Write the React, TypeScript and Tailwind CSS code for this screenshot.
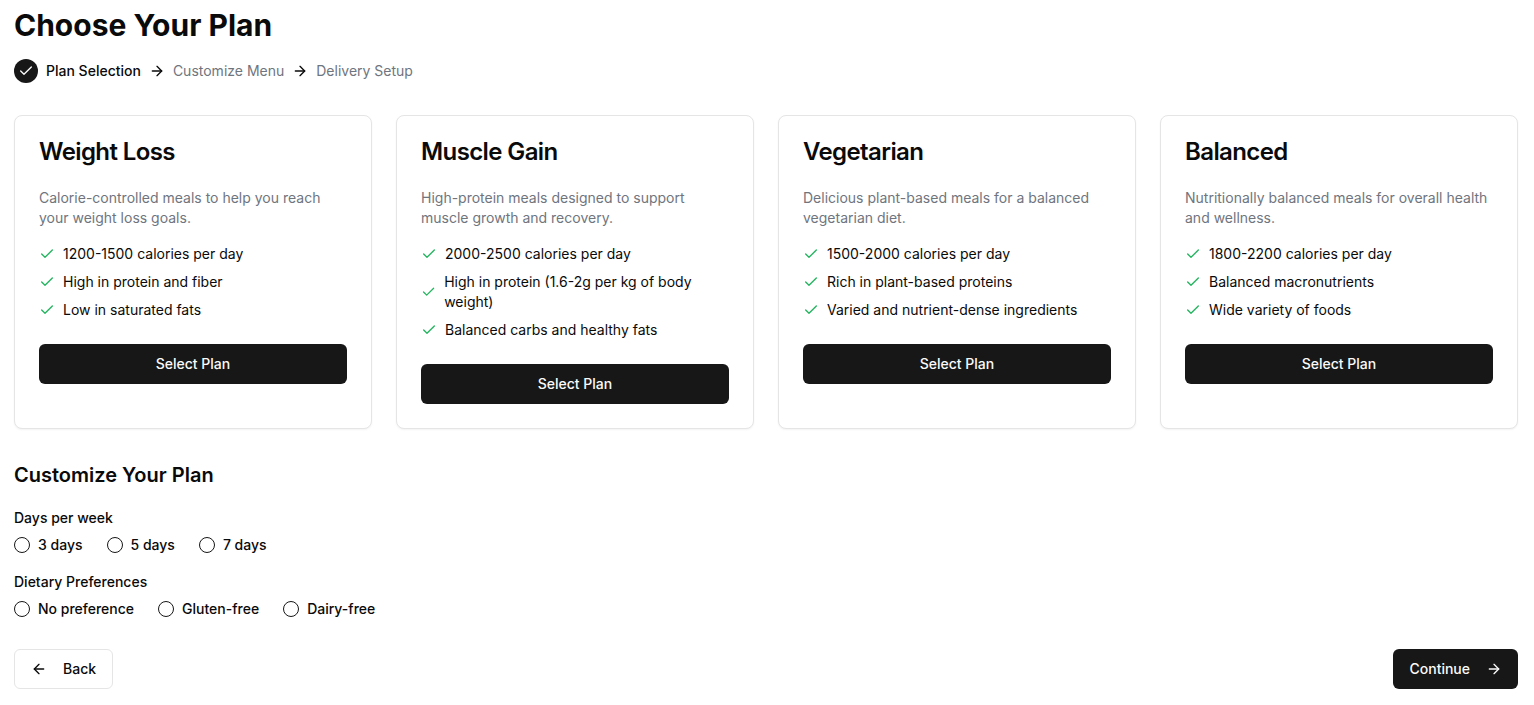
import { ArrowLeft, ArrowRight, Check } from "lucide-react";

const plans = [
  {
    name: "Weight Loss",
    description: "Calorie-controlled meals to help you reach your weight loss goals.",
    features: ["1200-1500 calories per day", "High in protein and fiber", "Low in saturated fats"],
  },
  {
    name: "Muscle Gain",
    description: "High-protein meals designed to support muscle growth and recovery.",
    features: [
      "2000-2500 calories per day",
      "High in protein (1.6-2g per kg of body weight)",
      "Balanced carbs and healthy fats",
    ],
  },
  {
    name: "Vegetarian",
    description: "Delicious plant-based meals for a balanced vegetarian diet.",
    features: [
      "1500-2000 calories per day",
      "Rich in plant-based proteins",
      "Varied and nutrient-dense ingredients",
    ],
  },
  {
    name: "Balanced",
    description: "Nutritionally balanced meals for overall health and wellness.",
    features: ["1800-2200 calories per day", "Balanced macronutrients", "Wide variety of foods"],
  },
];

function PlanCard({ plan }: { plan: (typeof plans)[number] }) {
  return (
    <div className="rounded-lg border border-[#e5e5e5] bg-white p-6 shadow-[0_1px_2px_0_rgba(0,0,0,0.05)]">
      <h3 className="mb-6 text-2xl leading-none font-semibold tracking-tight">{plan.name}</h3>
      <p className="mb-4 text-sm text-[#6f757e]">{plan.description}</p>
      <ul className="space-y-2 text-sm">
        {plan.features.map((feature) => (
          <li key={feature} className="flex items-center">
            <Check className="mr-2 size-4 text-[#22b55e]" />
            <span>{feature}</span>
          </li>
        ))}
      </ul>
      <button className="mt-6 h-10 w-full rounded-md bg-[#171717] text-sm font-medium text-[#fafafa]">Select Plan</button>
    </div>
  );
}

function RadioRow({ title, options }: { title: string; options: string[] }) {
  return (
    <div>
      <div className="mb-2 leading-6">
        <span className="text-sm font-medium">{title}</span>
      </div>
      <div className="flex gap-6">
        {options.map((option) => (
          <div key={option} className="flex h-4 items-center gap-2">
            <button className="size-4 rounded-full border border-[#171717]" />
            <span className="text-sm leading-none font-medium">{option}</span>
          </div>
        ))}
      </div>
    </div>
  );
}

export default function App() {
  return (
    <div className="min-h-[705px] bg-white pt-[7px] pr-4 pl-[14px] font-[Inter,sans-serif] text-[#0a0a0a]">
      <h1 className="mb-4 text-3xl font-bold">Choose Your Plan</h1>
      <div className="mb-8 flex h-6 items-center gap-2 text-sm">
        <div className="flex size-6 items-center justify-center rounded-full bg-[#171717] text-[#fafafa]">
          <Check className="size-4" />
        </div>
        <span className="font-medium">Plan Selection</span>
        <ArrowRight className="size-4" />
        <span className="text-[#6f757e]">Customize Menu</span>
        <ArrowRight className="size-4" />
        <span className="text-[#6f757e]">Delivery Setup</span>
      </div>
      <div className="mb-8 grid grid-cols-4 gap-6">
        {plans.map((plan) => (
          <PlanCard key={plan.name} plan={plan} />
        ))}
      </div>
      <h2 className="mb-4 text-xl font-semibold">Customize Your Plan</h2>
      <div className="mb-8 space-y-4">
        <RadioRow title="Days per week" options={["3 days", "5 days", "7 days"]} />
        <RadioRow title="Dietary Preferences" options={["No preference", "Gluten-free", "Dairy-free"]} />
      </div>
      <div className="flex justify-between">
        <button className="flex h-10 items-center gap-4 rounded-md border border-[#e5e5e5] px-4 text-sm font-medium">
          <ArrowLeft className="size-4" />
          Back
        </button>
        <button className="flex h-10 items-center gap-4 rounded-md bg-[#171717] px-4 text-sm font-medium text-[#fafafa]">
          Continue
          <ArrowRight className="size-4" />
        </button>
      </div>
    </div>
  );
}
